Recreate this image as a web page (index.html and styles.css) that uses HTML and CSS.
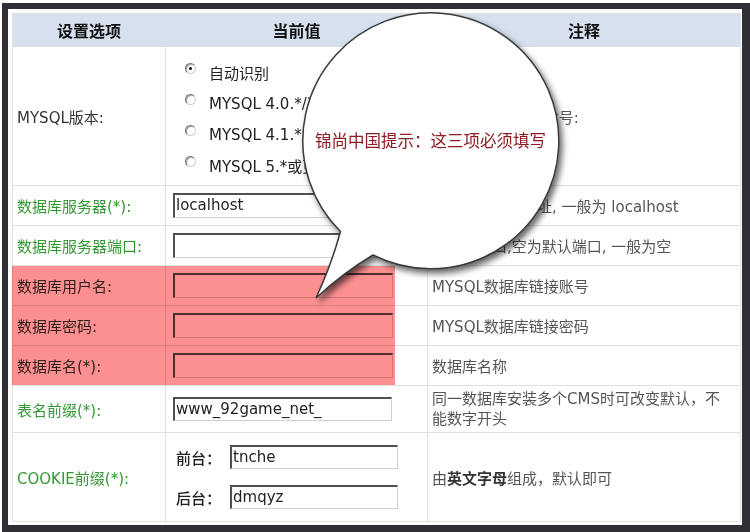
FILE: index.html
```html
<!DOCTYPE html>
<html lang="zh-CN">
<head>
<meta charset="utf-8">
<title>安装设置</title>
<link rel="stylesheet" href="styles.css">
</head>
<body>
<div class="page">
  <div class="frame">
    <table class="cfg">
      <colgroup><col class="c1"><col class="c2"><col class="c3"></colgroup>
      <thead>
        <tr class="head"><th>设置选项</th><th>当前值</th><th>注释</th></tr>
      </thead>
      <tbody>
        <tr class="r-ver">
          <td class="lbl">MYSQL版本:</td>
          <td class="val">
            <div class="radios">
              <div class="opt"><span class="radio on"></span>自动识别</div>
              <div class="opt"><span class="radio"></span>MYSQL 4.0.*/3.*</div>
              <div class="opt"><span class="radio"></span>MYSQL 4.1.*</div>
              <div class="opt"><span class="radio"></span>MYSQL 5.*或更高</div>
            </div>
          </td>
          <td class="note">请选择MYSQL版本号:</td>
        </tr>
        <tr class="r-std">
          <td class="lbl green">数据库服务器(*):</td>
          <td class="val"><div class="inp">localhost</div></td>
          <td class="note">数据库服务器地址, 一般为 localhost</td>
        </tr>
        <tr class="r-std">
          <td class="lbl green">数据库服务器端口:</td>
          <td class="val"><div class="inp"></div></td>
          <td class="note">数据库端口,空为默认端口, 一般为空</td>
        </tr>
        <tr class="r-std">
          <td class="lbl">数据库用户名:</td>
          <td class="val"><div class="inp"></div></td>
          <td class="note">MYSQL数据库链接账号</td>
        </tr>
        <tr class="r-std">
          <td class="lbl">数据库密码:</td>
          <td class="val"><div class="inp"></div></td>
          <td class="note">MYSQL数据库链接密码</td>
        </tr>
        <tr class="r-std">
          <td class="lbl">数据库名(*):</td>
          <td class="val"><div class="inp"></div></td>
          <td class="note">数据库名称</td>
        </tr>
        <tr class="r-pre">
          <td class="lbl green">表名前缀(*):</td>
          <td class="val"><div class="inp short">www_92game_net_</div></td>
          <td class="note two">同一数据库安装多个CMS时可改变默认，不<br>能数字开头</td>
        </tr>
        <tr class="r-cookie">
          <td class="lbl green">COOKIE前缀(*):</td>
          <td class="val">
            <div class="pairs">
              <div class="pair"><span class="plbl">前台：</span><div class="inp small">tnche</div></div>
              <div class="pair"><span class="plbl">后台：</span><div class="inp small">dmqyz</div></div>
            </div>
          </td>
          <td class="note">由<b>英文字母</b>组成，默认即可</td>
        </tr>
      </tbody>
    </table>
  </div>
  <div class="highlight"></div>
  <svg class="bubble" viewBox="0 0 750 532" width="750" height="532" aria-hidden="true">
    <defs>
      <filter id="sh" x="-20%" y="-20%" width="140%" height="140%">
        <feDropShadow dx="3" dy="4" stdDeviation="3" flood-color="#000" flood-opacity="0.6"/>
      </filter>
    </defs>
    <path d="M 340.5 231.5 Q 331 266 316 298 Q 343 273 373 255 A 128 128 0 1 0 340.5 231.5 Z" fill="#fff" stroke="#3a3a3a" stroke-width="1.5" filter="url(#sh)"/>
  </svg>
  <div class="bubble-text">锦尚中国提示：这三项必须填写</div>
</div>
</body>
</html>
```
FILE: styles.css
```css
body {
  margin: 0;
  background: #fff;
  font-family: "DejaVu Sans", "Noto Sans CJK SC", sans-serif;
  font-size: 15px;
  color: #333;
}
.page {
  position: relative;
  width: 750px;
  height: 532px;
  overflow: hidden;
}
.frame {
  margin: 3px 0 0 2px;
  border-style: solid;
  border-color: #2f2f35;
  border-width: 6px 8px 12px 6px;
  padding: 4px 2px 3px 4px;
  background: #fff;
}
.cfg {
  width: 728px;
  border-collapse: collapse;
  table-layout: fixed;
}
.c1 { width: 153px; }
.c2 { width: 262px; }
.c3 { width: 313px; }
.cfg th,
.cfg td {
  border: 1px solid #e0e0e0;
  padding: 0;
  vertical-align: middle;
}
.head th {
  height: 32px;
  background: #d6e0ee;
  font-family: "Noto Sans CJK SC", sans-serif;
  font-weight: 700;
  font-size: 16px;
  color: #111;
  text-align: center;
}
.r-ver td { height: 138px; }
.r-std td { height: 39px; }
.r-pre td { height: 46px; }
.r-cookie td { height: 88px; }
.lbl {
  padding-left: 4px !important;
  color: #333;
  white-space: nowrap;
}
.green { color: #339933; }
.val { padding-left: 7px !important; }
.note {
  padding-left: 4px !important;
  color: #555;
  white-space: nowrap;
}
.note.two {
  white-space: normal;
  line-height: 20px;
}
.note b { color: #333; }
.radios {
  display: flex;
  flex-direction: column;
  padding: 6px 0 0 12px;
}
.opt {
  display: flex;
  align-items: center;
  height: 31px;
  color: #222;
  white-space: nowrap;
}
.radio {
  flex: none;
  width: 11px;
  height: 11px;
  box-sizing: border-box;
  border-radius: 50%;
  border: 1px solid;
  border-color: #6f6f6f #d0d0d0 #d0d0d0 #6f6f6f;
  background: #fff;
  box-shadow: inset 1px 1px 0 #a8a8a8;
  margin: 0 13px 8px 0;
  display: flex;
  align-items: center;
  justify-content: center;
}
.radio.on::after {
  content: "";
  width: 3px;
  height: 3px;
  border-radius: 50%;
  background: #111;
}
.inp {
  box-sizing: border-box;
  width: 220px;
  height: 25px;
  border-style: solid;
  border-width: 2px 1px 1px 2px;
  border-color: #505050 #cfcfcf #cfcfcf #505050;
  background: #fff;
  padding-left: 1px;
  font-size: 15px;
  line-height: 21px;
  color: #222;
  white-space: nowrap;
  overflow: hidden;
}
.inp.short { width: 219px; height: 24px; line-height: 20px; }
.inp.small { width: 168px; height: 24px; line-height: 20px; }
.pairs {
  display: flex;
  flex-direction: column;
  gap: 16px;
  padding-left: 3px;
}
.pair {
  display: flex;
  align-items: center;
  gap: 9px;
}
.plbl {
  font-family: "Noto Sans CJK SC", sans-serif;
  color: #222;
  font-weight: 500;
  width: 45px;
}
.highlight {
  position: absolute;
  left: 12px;
  top: 266px;
  width: 383px;
  height: 119px;
  background: #fc9090;
  mix-blend-mode: multiply;
}
.bubble {
  position: absolute;
  left: 0;
  top: 0;
  pointer-events: none;
}
.bubble-text {
  position: absolute;
  left: 315px;
  top: 129px;
  font-family: "Noto Sans CJK SC", sans-serif;
  font-size: 16.5px;
  line-height: 22px;
  color: #8e1c22;
  white-space: nowrap;
}
```
